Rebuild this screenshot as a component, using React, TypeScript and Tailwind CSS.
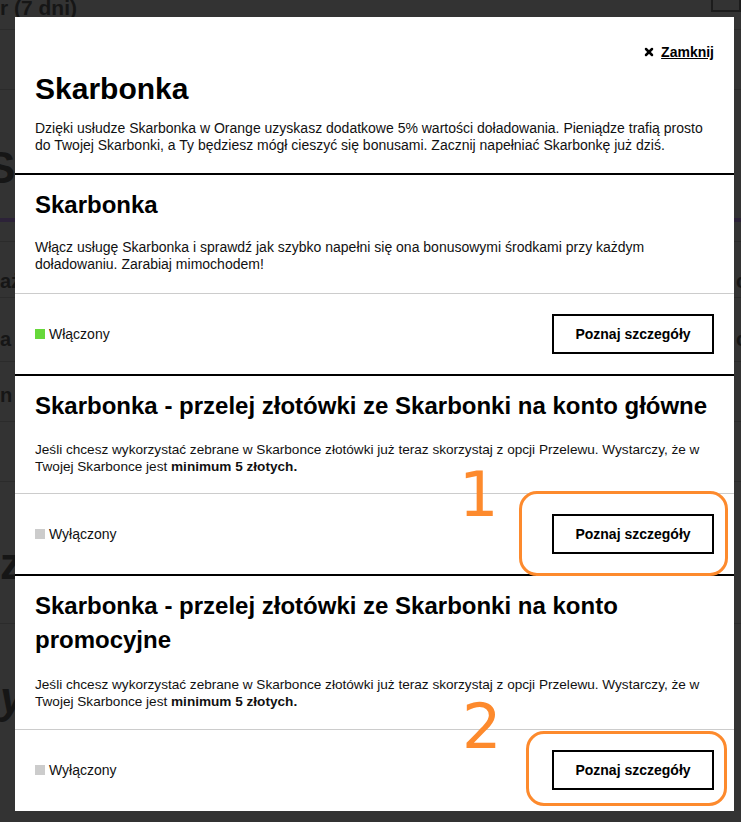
import { X } from "lucide-react";

type Section = {
  title: string;
  body: React.ReactNode;
  on: boolean;
  gap: string;
  pb: string;
  size: string;
};

const MIN = <b className="font-bold">minimum 5 złotych.</b>;

const transferText = (
  <>
    Jeśli chcesz wykorzystać zebrane w Skarbonce złotówki już teraz skorzystaj z opcji Przelewu. Wystarczy, że w Twojej
    Skarbonce jest {MIN}
  </>
);

const sections: Section[] = [
  {
    title: "Skarbonka",
    body: "Włącz usługę Skarbonka i sprawdź jak szybko napełni się ona bonusowymi środkami przy każdym doładowaniu. Zarabiaj mimochodem!",
    on: true,
    gap: "mt-[17px]",
    pb: "pb-[20px]",
    size: "text-[14px]",
  },
  {
    title: "Skarbonka - przelej złotówki ze Skarbonki na konto główne",
    body: transferText,
    on: false,
    gap: "mt-[18px]",
    pb: "pb-[18px]",
    size: "text-[13.6px]",
  },
  {
    title: "Skarbonka - przelej złotówki ze Skarbonki na konto promocyjne",
    body: transferText,
    on: false,
    gap: "mt-[19px]",
    pb: "pb-[19px]",
    size: "text-[13.6px]",
  },
];

function ServiceSection({ s }: { s: Section }) {
  return (
    <div className="border-t-2 border-black">
      <div className={`border-b border-[#cccccc] px-5 pt-[13px] ${s.pb}`}>
        <h2 className="text-[24px] font-bold leading-[34px] text-black">{s.title}</h2>
        <p className={`${s.gap} ${s.size} leading-[17px] text-[#111]`}>{s.body}</p>
      </div>
      <div className="flex items-center justify-between px-5 py-[20px]">
        <div className="flex items-center gap-1 text-[14px] text-[#111]">
          <span className={`h-[10px] w-[10px] ${s.on ? "bg-[#66d83a]" : "bg-[#cccccc]"}`} />
          {s.on ? "Włączony" : "Wyłączony"}
        </div>
        <button
          type="button"
          className="h-[40px] w-[162px] border-2 border-black bg-white text-[14px] font-bold text-black"
        >
          Poznaj szczegóły
        </button>
      </div>
    </div>
  );
}

// dimmed page behind the dialog
function Backdrop() {
  return (
    <div className="flex h-full flex-col bg-[#333333] text-[#161616]">
      <div className="flex h-[30px] items-start justify-between border-b border-[#2b2b2b]">
        <span className="-mt-[8px] text-[21px] font-semibold">r (7 dni)</span>
        <span className="-mt-[2px] h-[14px] w-[30px] border-2 border-[#1c1c1c]" />
      </div>
      <div className="h-[60px] border-b border-[#2b2b2b]" />
      <div className="mt-[58px] h-[74px] border-b-4 border-[#2c2238] text-[44px] font-bold leading-[40px]">
        <span className="-ml-[14px]">S</span>
      </div>
      <div className="h-[20px] border-b border-[#2b2b2b]" />
      <div className="flex h-[56px] justify-between border-b border-[#2b2b2b] pt-[24px] text-[20px] font-bold">
        <span>aż</span>
        <span className="-mr-[6px]">c</span>
      </div>
      <div className="flex h-[64px] justify-between border-b border-[#2b2b2b] pt-[26px] text-[20px] font-bold">
        <span>a p</span>
        <span className="-mr-[6px]">c</span>
      </div>
      <div className="h-[60px] border-b border-[#2b2b2b] pt-[18px] text-[20px] font-bold">n</div>
      <div className="h-[60px] border-b border-[#2b2b2b]" />
      <div className="h-[142px] border-b border-[#2b2b2b] pt-[62px] text-[44px] font-bold leading-[40px]">z</div>
      <div className="pt-[54px] text-[44px] font-bold italic leading-[40px]">y/</div>
    </div>
  );
}

export default function App() {
  return (
    <div
      className="relative h-[822px] w-[741px] overflow-hidden"
      style={{ fontFamily: '"Liberation Sans", Arial, sans-serif' }}
    >
      <Backdrop />

      <div className="absolute left-[15px] top-[17px] h-[794px] w-[719px] overflow-hidden bg-white">
        <div className="px-5 pt-[27px] pb-[19px]">
          <div className="flex justify-end">
            <a className="flex items-center gap-[6px] text-[14px] font-bold leading-[16px] text-black underline">
              <X size={12} strokeWidth={5} />
              Zamknij
            </a>
          </div>
          <h1 className="mt-[12px] text-[30px] font-bold leading-[34px] text-black">Skarbonka</h1>
          <p className="mt-[14px] text-[14px] leading-[17px] text-[#111]">
            Dzięki usłudze Skarbonka w Orange uzyskasz dodatkowe 5% wartości doładowania. Pieniądze trafią prosto do Twojej
            Skarbonki, a Ty będziesz mógł cieszyć się bonusami. Zacznij napełniać Skarbonkę już dziś.
          </p>
        </div>
        {sections.map((s) => (
          <ServiceSection key={s.title} s={s} />
        ))}
      </div>

      {/* orange callouts */}
      <span
        className="absolute left-[459px] top-[460px] text-[62px] leading-[70px] text-[#fd8a2d]"
        style={{ fontFamily: '"DejaVu Sans", sans-serif' }}
      >
        1
      </span>
      <div className="absolute left-[519px] top-[491px] h-[85px] w-[209px] rounded-[18px] border-[3px] border-[#fd8a2d]" />
      <span
        className="absolute left-[462px] top-[692px] text-[62px] leading-[70px] text-[#fd8a2d]"
        style={{ fontFamily: '"DejaVu Sans", sans-serif' }}
      >
        2
      </span>
      <div className="absolute left-[526px] top-[731px] h-[75px] w-[201px] rounded-[18px] border-[3px] border-[#fd8a2d]" />
    </div>
  );
}
